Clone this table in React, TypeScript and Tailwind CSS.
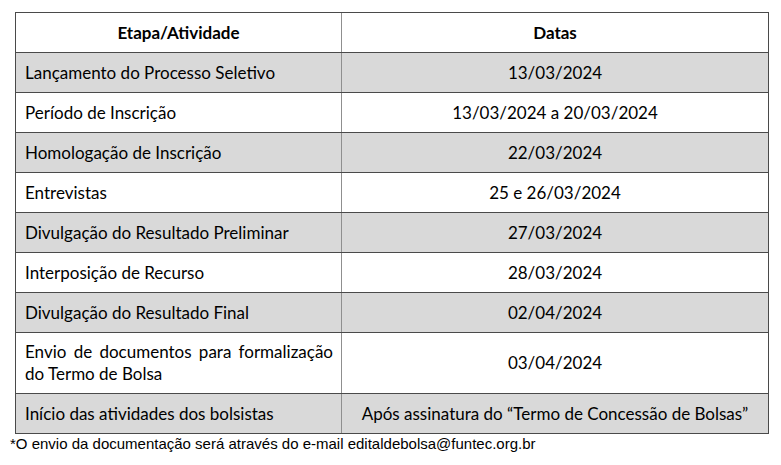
const rows: { etapa: string; data: string; shaded: boolean; tall?: boolean }[] = [
  { etapa: "Lançamento do Processo Seletivo", data: "13/03/2024", shaded: true },
  { etapa: "Período de Inscrição", data: "13/03/2024 a 20/03/2024", shaded: false },
  { etapa: "Homologação de Inscrição", data: "22/03/2024", shaded: true },
  { etapa: "Entrevistas", data: "25 e 26/03/2024", shaded: false },
  { etapa: "Divulgação do Resultado Preliminar", data: "27/03/2024", shaded: true },
  { etapa: "Interposição de Recurso", data: "28/03/2024", shaded: false },
  { etapa: "Divulgação do Resultado Final", data: "02/04/2024", shaded: true },
  {
    etapa: "Envio de documentos para formalização do Termo de Bolsa",
    data: "03/04/2024",
    shaded: false,
    tall: true,
  },
  {
    etapa: "Início das atividades dos bolsistas",
    data: "Após assinatura do “Termo de Concessão de Bolsas”",
    shaded: true,
  },
];

export default function App() {
  return (
    <div className="w-[781px] h-[465px] bg-white overflow-hidden">
      <div
        className="ml-[15px] mt-[12px] w-[754px] border border-[#4a4a4a] text-[17px] text-black"
        style={{ fontFamily: "Lato, 'Open Sans', sans-serif" }}
      >
        <div className="grid grid-cols-[326px_1fr] h-[39px] font-bold text-[17px]">
          <div className="flex items-center justify-center border-r border-[#8f8f8f]">
            Etapa/Atividade
          </div>
          <div className="flex items-center justify-center">Datas</div>
        </div>
        {rows.map((r) => (
          <div
            key={r.etapa}
            className={`grid grid-cols-[326px_1fr] border-t border-[#4a4a4a] ${
              r.tall ? "h-[61px]" : "h-[40px]"
            } ${r.shaded ? "bg-[#d9d9d9]" : "bg-white"}`}
          >
            <div className="flex items-center border-r border-[#8f8f8f] pl-[9px] pr-[8px]">
              {r.tall ? (
                <div className="w-full leading-[22px]">
                  <div className="text-justify [text-align-last:justify]">
                    Envio de documentos para formalização
                  </div>
                  <div>do Termo de Bolsa</div>
                </div>
              ) : (
                r.etapa
              )}
            </div>
            <div className="flex items-center justify-center">{r.data}</div>
          </div>
        ))}
      </div>
      <div
        className="pl-[10px] pt-[1px] text-[15px] leading-[18px] text-black"
        style={{ fontFamily: "'Liberation Sans', Arial, sans-serif" }}
      >
        *O envio da documentação será através do e-mail editaldebolsa@funtec.org.br
      </div>
    </div>
  );
}
